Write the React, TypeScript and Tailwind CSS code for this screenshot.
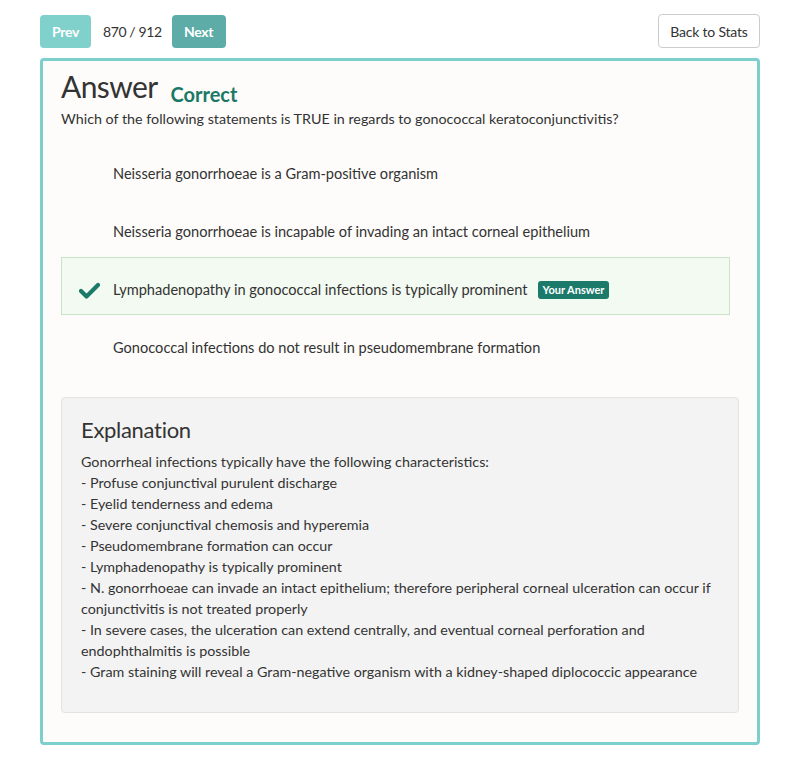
import React from "react";

const options = [
  { text: "Neisseria gonorrhoeae is a Gram-positive organism", selected: false },
  { text: "Neisseria gonorrhoeae is incapable of invading an intact corneal epithelium", selected: false },
  { text: "Lymphadenopathy in gonococcal infections is typically prominent", selected: true },
  { text: "Gonococcal infections do not result in pseudomembrane formation", selected: false },
];

const explanation = [
  "Gonorrheal infections typically have the following characteristics:",
  "- Profuse conjunctival purulent discharge",
  "- Eyelid tenderness and edema",
  "- Severe conjunctival chemosis and hyperemia",
  "- Pseudomembrane formation can occur",
  "- Lymphadenopathy is typically prominent",
  "- N. gonorrhoeae can invade an intact epithelium; therefore peripheral corneal ulceration can occur if",
  "conjunctivitis is not treated properly",
  "- In severe cases, the ulceration can extend centrally, and eventual corneal perforation and",
  "endophthalmitis is possible",
  "- Gram staining will reveal a Gram-negative organism with a kidney-shaped diplococcic appearance",
];

function Check() {
  return (
    <svg width="21" height="17" viewBox="0 0 21 17" className="shrink-0">
      <path d="M2 9 L7.5 14.5 L19 3" fill="none" stroke="#1b7a6a" strokeWidth="4.2" strokeLinecap="round" strokeLinejoin="round" />
    </svg>
  );
}

export default function App() {
  return (
    <div className="min-h-[769px] bg-white text-[#333333]" style={{ fontFamily: "Lato, 'Open Sans', sans-serif" }}>
      <div className="mx-auto w-[720px] pt-[14px] pb-6">
        <div className="flex items-center justify-between h-[34px]">
          <div className="flex items-center">
            <button className="h-[33px] w-[51px] rounded-[4px] bg-[#80d0cc] text-white font-bold text-[14px] tracking-[-0.3px]">Prev</button>
            <span className="ml-[12px] mr-[10px] text-[14px] tracking-[-0.4px] text-[#333]">870 / 912</span>
            <button className="h-[33px] w-[54px] rounded-[4px] bg-[#5eaca8] text-white font-bold text-[14px] tracking-[-0.3px]">Next</button>
          </div>
          <button className="h-[34px] w-[102px] rounded-[4px] border border-[#cccccc] bg-white text-[14px] tracking-[-0.2px] text-[#333]">Back to Stats</button>
        </div>

        <div className="mt-[10px] rounded-[4px] border-[3px] border-[#7dcfcb] bg-[#fdfcfa] px-[18px] pt-[6px] pb-[29px]">
          <div className="flex items-end">
            <span className="text-[30px] leading-[38px] tracking-[-0.6px] text-[#333]">Answer</span>
            <span className="ml-[13px] mb-[-4px] text-[20px] leading-[30px] font-bold text-[#1b7866]">Correct</span>
          </div>
          <div className="mt-[4px] text-[14.3px] leading-[20px]">Which of the following statements is TRUE in regards to gonococcal keratoconjunctivitis?</div>

          <div className="mt-[12px] w-[669px]">
            {options.map((o, i) => (
              <div
                key={i}
                className={
                  "flex h-[58px] items-center pt-[8px] " +
                  (o.selected ? "border border-[#c9e3c9] bg-[#f3faf2]" : "border border-transparent")
                }
              >
                <div className="w-[51px] flex justify-center pl-[4px]">{o.selected ? <Check /> : null}</div>
                <span className="text-[14.6px]">{o.text}</span>
                {o.selected ? (
                  <span className="ml-[10px] rounded-[3px] bg-[#1b7a6a] px-[5px] py-[2px] text-[11px] font-bold leading-[14px] text-white">Your Answer</span>
                ) : null}
              </div>
            ))}
          </div>

          <div className="mt-[24px] rounded-[4px] border border-[#e3e3e3] bg-[#f3f3f3] px-[19px] pt-[17px] pb-[30px]">
            <div className="text-[22px] leading-[30px] tracking-[-0.3px] text-[#333]">Explanation</div>
            <div className="mt-[6px] text-[14.3px] leading-[21px]">
              {explanation.map((l, i) => (
                <div key={i} className="whitespace-nowrap">{l}</div>
              ))}
            </div>
          </div>
        </div>
      </div>
    </div>
  );
}
